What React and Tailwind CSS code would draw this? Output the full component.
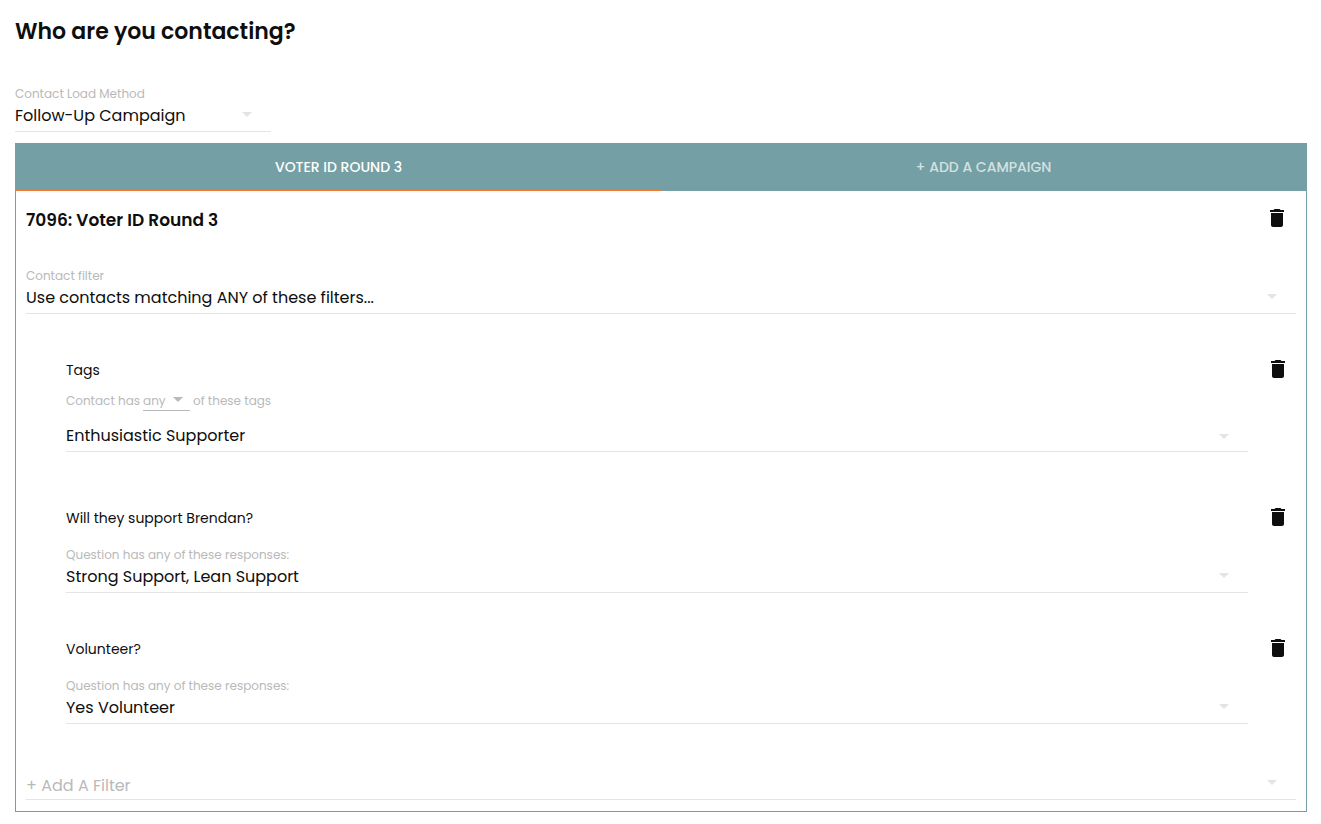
import { useId } from "react";

function ArrowDropDown({ className }) {
  return (
    <svg
      viewBox="0 0 24 24"
      aria-hidden="true"
      className={`pointer-events-none absolute h-6 w-6 fill-current ${className}`}
    >
      <path d="M7 10l5 5 5-5z" />
    </svg>
  );
}

function DeleteButton({ label, className }) {
  return (
    <button type="button" aria-label={label} className={`h-6 w-6 shrink-0 ${className}`}>
      <svg viewBox="0 0 24 24" aria-hidden="true" className="h-6 w-6 fill-current">
        <path d="M6 19c0 1.1.9 2 2 2h8c1.1 0 2-.9 2-2V7H6v12zM19 4h-3.5l-1-1h-5l-1 1H5v2h14V4z" />
      </svg>
    </button>
  );
}

function SelectField({
  label,
  hiddenLabel,
  value,
  className = "",
  textClass = "pb-1 text-[#0e0e0e]",
  arrowClass = "bottom-1.5",
}) {
  const id = useId();
  return (
    <div className={className}>
      {label && (
        <label htmlFor={id} className="block text-[12px] leading-5 text-[#b9b9b9]">
          {label}
        </label>
      )}
      <div className="relative">
        <select
          id={id}
          aria-label={hiddenLabel}
          className={`block h-7 w-full appearance-none border-b border-[#e4e4e4] bg-transparent pr-9 text-[16px] leading-6 outline-none ${textClass}`}
        >
          <option>{value}</option>
        </select>
        <ArrowDropDown className={`right-3 text-[#e4e4e2] ${arrowClass}`} />
      </div>
    </div>
  );
}

function FilterBlock({ title, className = "", children }) {
  return (
    <section className={`flex items-start pl-10 ${className}`}>
      <div className="min-w-0 flex-1">
        <h3 className="text-[14px] leading-[26px]">{title}</h3>
        {children}
      </div>
      <DeleteButton label={`Delete filter ${title}`} className="mr-1.5 ml-[18px]" />
    </section>
  );
}

export default function App() {
  return (
    <main className="bg-white py-4 pr-[14px] pl-[15px] font-['Poppins','Inter',sans-serif] text-[#0e0e0e]">
      <h1 className="text-[22px] leading-8 font-semibold">Who are you contacting?</h1>
      <SelectField
        label="Contact Load Method"
        value="Follow-Up Campaign"
        className="mt-9 w-64 max-w-full"
      />

      <div className="mt-[11px] border border-[#749fa4]">
        <div role="tablist" className="grid h-[47px] grid-cols-2 bg-[#749fa4] text-[14px] font-medium">
          <button
            type="button"
            role="tab"
            aria-selected="true"
            className="border-b-2 border-[#f27830] pt-0.5 uppercase text-white"
          >
            Voter ID Round 3
          </button>
          <button
            type="button"
            role="tab"
            aria-selected="false"
            className="border-b-2 border-transparent pt-0.5 uppercase text-white/70"
          >
            + Add a Campaign
          </button>
        </div>

        <div className="px-2.5 pt-[15px] pb-[11px]">
          <div className="flex items-start justify-between">
            <h2 className="text-[17px] leading-7 font-semibold">7096: Voter ID Round 3</h2>
            <DeleteButton label="Delete campaign" className="mr-[7px]" />
          </div>

          <SelectField
            label="Contact filter"
            value="Use contacts matching ANY of these filters..."
            className="mt-8"
          />

          <FilterBlock title="Tags" className="mt-[43px]">
            <div className="mt-[7px] flex gap-[3px] text-[12px] leading-[22px] text-[#b9b9b9]">
              <span>Contact has</span>
              <div className="relative h-[21px] w-[47px]">
                <select
                  aria-label="Tag match mode"
                  className="block h-[21px] w-full appearance-none border-b border-[#b9b9b9] bg-transparent outline-none"
                >
                  <option>any</option>
                </select>
                <ArrowDropDown className="right-0 bottom-0" />
              </div>
              <span>of these tags</span>
            </div>
            <SelectField
              hiddenLabel="Tags"
              value="Enthusiastic Supporter"
              className="mt-3"
              arrowClass="bottom-1"
            />
          </FilterBlock>

          <FilterBlock title="Will they support Brendan?" className="mt-[53px]">
            <SelectField
              label="Question has any of these responses:"
              value="Strong Support, Lean Support"
              className="mt-[14px]"
            />
          </FilterBlock>

          <FilterBlock title="Volunteer?" className="mt-[43px]">
            <SelectField
              label="Question has any of these responses:"
              value="Yes Volunteer"
              className="mt-[14px]"
            />
          </FilterBlock>

          <SelectField
            hiddenLabel="Add a filter"
            value="+ Add A Filter"
            className="mt-12"
            textClass="text-[#b9b9b9]"
          />
        </div>
      </div>
    </main>
  );
}
